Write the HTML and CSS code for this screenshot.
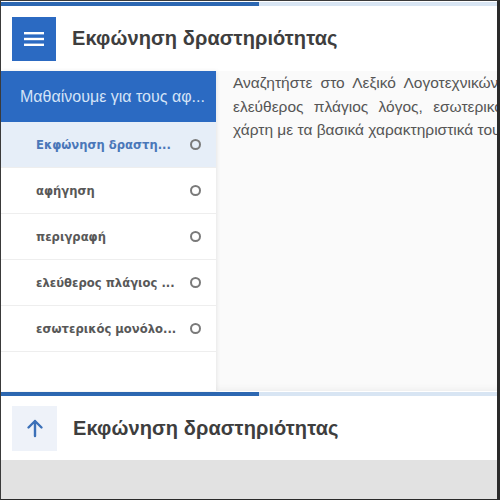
FILE: index.html
```html
<!DOCTYPE html>
<html lang="el">
<head>
<meta charset="utf-8">
<title>Εκφώνηση δραστηριότητας</title>
<link rel="stylesheet" href="styles.css">
</head>
<body>
<div class="frame">
  <div class="progress"><div class="progress-fill" style="width:258px"></div></div>
  <header class="topbar">
    <button class="menu-btn" aria-label="menu">
      <svg width="20" height="16" viewBox="0 0 20 16"><rect x="0" y="1" width="20" height="2.4" fill="#fff"/><rect x="0" y="6.8" width="20" height="2.4" fill="#fff"/><rect x="0" y="12.6" width="20" height="2.4" fill="#fff"/></svg>
    </button>
    <h1 class="title">Εκφώνηση δραστηριότητας</h1>
  </header>
  <div class="main">
    <nav class="sidebar">
      <div class="side-head">Μαθαίνουμε για τους αφ...</div>
      <ul class="steps">
        <li class="step active"><span class="step-label">Εκφώνηση δραστη...</span><span class="dot"></span></li>
        <li class="step"><span class="step-label">αφήγηση</span><span class="dot"></span></li>
        <li class="step"><span class="step-label">περιγραφή</span><span class="dot"></span></li>
        <li class="step"><span class="step-label">ελεύθερος πλάγιος ...</span><span class="dot"></span></li>
        <li class="step"><span class="step-label">εσωτερικός μονόλο...</span><span class="dot"></span></li>
      </ul>
    </nav>
    <section class="content">
      <p class="task">
        <span class="line l1">Αναζητήστε στο Λεξικό Λογοτεχνικών Όρων τους όρους αφήγηση, περιγραφή,</span>
        <span class="line l2">ελεύθερος πλάγιος λόγος, εσωτερικός μονόλογος και δημιουργήστε εννοιολογικό</span>
        <span class="line">χάρτη με τα βασικά χαρακτηριστικά τους.</span>
      </p>
    </section>
  </div>
  <div class="progress"><div class="progress-fill" style="width:258px"></div></div>
  <footer class="bottombar">
    <button class="up-btn" aria-label="up">
      <svg width="20" height="20" viewBox="0 0 20 20"><path d="M10 18V3M3.5 9.5L10 3l6.5 6.5" fill="none" stroke="#3b70b8" stroke-width="2.4" stroke-linecap="round" stroke-linejoin="round"/></svg>
    </button>
    <h2 class="title">Εκφώνηση δραστηριότητας</h2>
  </footer>
  <div class="tail"></div>
</div>
</body>
</html>
```
FILE: styles.css
```css
html, body {
  margin: 0;
  padding: 0;
  background: #2a2a2a;
}
.frame {
  width: 496px;
  height: 498px;
  border-top: 1px solid #3a3a3a;
  border-left: 1px solid #3a3a3a;
  border-right: 3px solid #2a2a2a;
  border-bottom: 1px solid #2a2a2a;
  background: #fff;
  display: flex;
  flex-direction: column;
  overflow: hidden;
  font-family: "Liberation Sans", Arial, sans-serif;
}
.progress {
  height: 4px;
  margin-top: 1px;
  background: #d8e5f3;
  flex: none;
}
.progress-fill {
  height: 100%;
  background: #2d68b2;
}
.topbar {
  height: 65px;
  display: flex;
  align-items: center;
  padding-left: 11px;
  gap: 16px;
  flex: none;
  background: #fff;
}
.menu-btn {
  width: 44px;
  height: 44px;
  border: 0;
  padding: 0;
  background: #2b6ac2;
  display: flex;
  align-items: center;
  justify-content: center;
}
.title {
  margin: 0;
  font-size: 20px;
  font-weight: bold;
  color: #3e3e3e;
  letter-spacing: 0.1px;
}
.main {
  height: 320px;
  display: flex;
  flex: none;
}
.sidebar {
  width: 215px;
  flex: none;
  background: #fff;
  box-shadow: 1px 0 4px rgba(0,0,0,0.08);
  position: relative;
  z-index: 1;
}
.side-head {
  height: 51px;
  background: #2b6ac2;
  color: #d4e3f7;
  font-size: 16px;
  display: flex;
  align-items: center;
  padding-left: 19px;
  white-space: nowrap;
}
.steps {
  list-style: none;
  margin: 0;
  padding: 0;
}
.step {
  height: 45px;
  border-bottom: 1px solid #eeeeee;
  display: flex;
  align-items: center;
  justify-content: space-between;
  padding: 0 15px 0 35px;
  font-family: "DejaVu Sans", Verdana, sans-serif;
  font-size: 11.6px;
  font-weight: bold;
  color: #585858;
}
.step.active {
  background: #e6eef8;
  color: #4a77b9;
}
.dot {
  width: 7px;
  height: 7px;
  border: 2px solid #7a7a7a;
  border-radius: 50%;
}
.content {
  flex: 1;
  background: #fafafa;
  overflow: hidden;
  padding: 0 0 0 17px;
  box-shadow: inset 0 -6px 8px -6px rgba(0,0,0,0.08);
}
.task {
  margin: 0;
  width: 700px;
  font-family: "Liberation Sans", Arial, sans-serif;
  font-size: 15.5px;
  line-height: 23.5px;
  color: #555;
}
.line {
  display: block;
  white-space: nowrap;
}
.l1 {
  word-spacing: 4px;
}
.l2 {
  word-spacing: 6px;
}
.bottombar {
  height: 64px;
  display: flex;
  align-items: center;
  padding-left: 11px;
  gap: 16px;
  flex: none;
  background: #fff;
}
.up-btn {
  width: 45px;
  height: 45px;
  border: 0;
  padding: 0;
  background: #eef2f9;
  display: flex;
  align-items: center;
  justify-content: center;
}
.tail {
  flex: 1;
  background: #e2e2e2;
}
```
